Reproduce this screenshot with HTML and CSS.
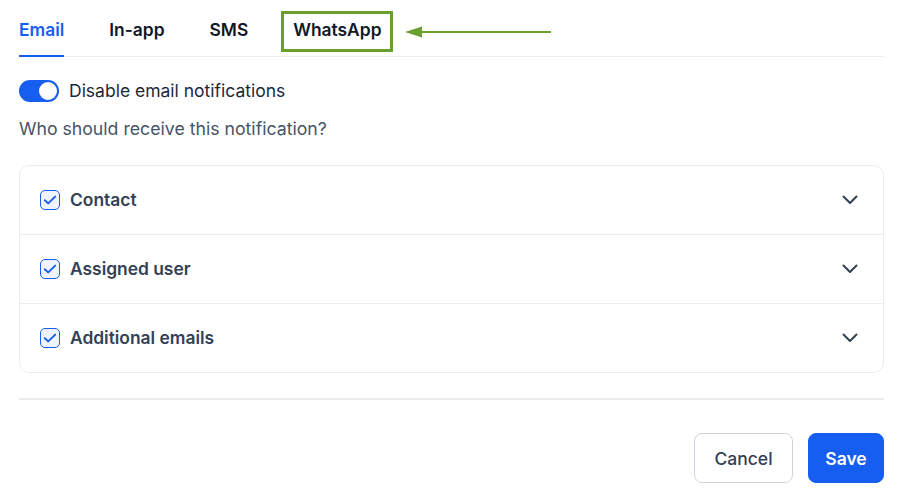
FILE: index.html
```html
<!DOCTYPE html>
<html lang="en">
<head>
<meta charset="utf-8">
<title>Notification settings</title>
<link rel="stylesheet" href="styles.css">
</head>
<body>
<div class="panel">
  <nav class="tabs">
    <span class="tab active">Email</span>
    <span class="tab">In-app</span>
    <span class="tab">SMS</span>
    <span class="tab tab-highlight">WhatsApp
      <span class="highlight-box"></span>
      <svg class="arrow" width="150" height="14" viewBox="0 0 150 14">
        <line x1="14" y1="7" x2="148" y2="7" stroke="#6a9f30" stroke-width="2.2"/>
        <polygon points="2,7 19,1.5 19,12.5" fill="#6a9f30"/>
      </svg>
    </span>
  </nav>

  <div class="toggle-row">
    <span class="toggle"><span class="knob"></span></span>
    <span class="toggle-label">Disable email notifications</span>
  </div>

  <p class="question">Who should receive this notification?</p>

  <div class="card">
    <div class="row">
      <span class="checkbox"><svg width="14" height="14" viewBox="0 0 14 14"><path d="M1.8 7.2 L5.2 10.4 L12.2 3.6" fill="none" stroke="#155eef" stroke-width="1.9" stroke-linecap="round" stroke-linejoin="round"/></svg></span>
      <span class="row-label">Contact</span>
      <svg class="chevron" width="16" height="10" viewBox="0 0 16 10"><path d="M1.5 1.5 L8 8 L14.5 1.5" fill="none" stroke="#344054" stroke-width="2" stroke-linecap="round" stroke-linejoin="round"/></svg>
    </div>
    <div class="row">
      <span class="checkbox"><svg width="14" height="14" viewBox="0 0 14 14"><path d="M1.8 7.2 L5.2 10.4 L12.2 3.6" fill="none" stroke="#155eef" stroke-width="1.9" stroke-linecap="round" stroke-linejoin="round"/></svg></span>
      <span class="row-label">Assigned user</span>
      <svg class="chevron" width="16" height="10" viewBox="0 0 16 10"><path d="M1.5 1.5 L8 8 L14.5 1.5" fill="none" stroke="#344054" stroke-width="2" stroke-linecap="round" stroke-linejoin="round"/></svg>
    </div>
    <div class="row">
      <span class="checkbox"><svg width="14" height="14" viewBox="0 0 14 14"><path d="M1.8 7.2 L5.2 10.4 L12.2 3.6" fill="none" stroke="#155eef" stroke-width="1.9" stroke-linecap="round" stroke-linejoin="round"/></svg></span>
      <span class="row-label">Additional emails</span>
      <svg class="chevron" width="16" height="10" viewBox="0 0 16 10"><path d="M1.5 1.5 L8 8 L14.5 1.5" fill="none" stroke="#344054" stroke-width="2" stroke-linecap="round" stroke-linejoin="round"/></svg>
    </div>
  </div>

  <hr class="divider">

  <div class="actions">
    <button class="btn btn-secondary">Cancel</button>
    <button class="btn btn-primary">Save</button>
  </div>
</div>
</body>
</html>
```

FILE: styles.css
```css
* { box-sizing: border-box; }

html, body {
  margin: 0;
  padding: 0;
  background: #ffffff;
}

body {
  font-family: Inter, "Noto Sans", "Liberation Sans", sans-serif;
  color: #101828;
  width: 900px;
  height: 497px;
  overflow: hidden;
}

.panel {
  padding: 18px 16px 0 19px;
}

.tabs {
  display: flex;
  gap: 45px;
  border-bottom: 1px solid #eaecf0;
}

.tab {
  position: relative;
  font-size: 17.4px;
  line-height: 24px;
  font-weight: 600;
  color: #101828;
  padding-bottom: 13px;
  border-bottom: 2px solid transparent;
  margin-bottom: -1px;
}

.tab.active {
  color: #155eef;
  border-bottom-color: #155eef;
}

.highlight-box {
  position: absolute;
  left: -12px;
  top: -7px;
  width: 112px;
  height: 41px;
  border: 3px solid #6a9f30;
}

.arrow {
  position: absolute;
  left: 110px;
  top: 7px;
}

.toggle-row {
  display: flex;
  align-items: center;
  gap: 10px;
  margin-top: 23px;
  height: 22px;
}

.toggle {
  width: 40px;
  height: 22px;
  border-radius: 11px;
  background: #155eef;
  display: flex;
  align-items: center;
  justify-content: flex-end;
  padding: 2px;
}

.knob {
  width: 18px;
  height: 18px;
  border-radius: 50%;
  background: #ffffff;
}

.toggle-label {
  font-size: 17.5px;
  line-height: 24px;
  color: #1d2939;
}

.question {
  margin: 15px 0 0;
  font-size: 17.7px;
  line-height: 24px;
  color: #475467;
}

.card {
  margin-top: 24px;
  border: 1px solid #eaecf0;
  border-radius: 10px;
}

.row {
  display: flex;
  align-items: center;
  height: 69px;
  padding: 0 25px 0 20px;
  border-top: 1px solid #eaecf0;
}

.row:first-child {
  border-top: none;
  height: 68px;
}

.checkbox {
  width: 20px;
  height: 20px;
  border: 1.5px solid #155eef;
  border-radius: 5px;
  background: #eff4ff;
  display: flex;
  align-items: center;
  justify-content: center;
  flex-shrink: 0;
}

.row-label {
  margin-left: 10px;
  font-size: 17.4px;
  line-height: 24px;
  font-weight: 600;
  color: #344054;
  flex: 1;
}

.chevron {
  flex-shrink: 0;
}

.divider {
  margin: 25px 0 0;
  border: none;
  border-top: 2px solid #eaecf0;
  height: 0;
}

.actions {
  display: flex;
  justify-content: flex-end;
  gap: 15px;
  margin-top: 33px;
}

.btn {
  height: 50px;
  border-radius: 8px;
  font-family: inherit;
  font-size: 17.5px;
  font-weight: 600;
  padding: 0;
}

.btn-secondary {
  width: 99px;
  background: #ffffff;
  border: 1px solid #d0d5dd;
  color: #344054;
  font-weight: 500;
}

.btn-primary {
  width: 76px;
  background: #155eef;
  border: 1px solid #155eef;
  color: #ffffff;
}
```
